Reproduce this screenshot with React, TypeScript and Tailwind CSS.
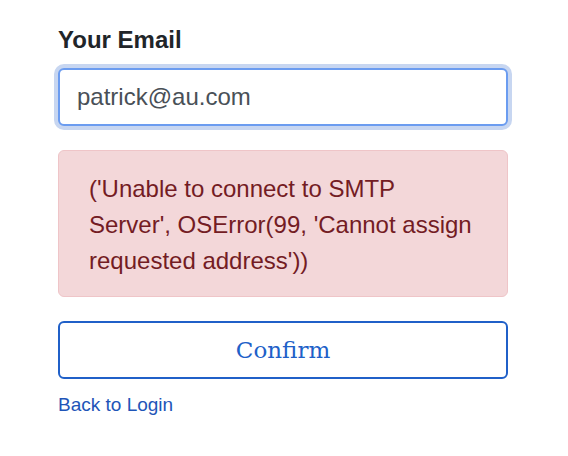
export default function App() {
  return (
    <div className="w-[568px] h-[456px] bg-white" style={{ fontFamily: '"Liberation Sans", Arial, sans-serif' }}>
      <div className="pl-[58px] pr-[60px] pt-[22px] flex flex-col">
        <label className="text-[24px] font-bold text-[#212529] leading-[36px]">Your Email</label>
        <div className="mt-[10px] h-[58px] rounded-[6px] border-2 border-[#6b9cf0] bg-white flex items-center pl-[17px] text-[24px] text-[#495057] shadow-[0_0_0_4px_#c7d6f1]">
          patrick@au.com
        </div>
        <div className="mt-[24px] rounded-[6px] border border-[#efc5c8] bg-[#f3d7d9] pl-[30px] pr-[30px] pt-[20px] pb-[17px] text-[24px] leading-[36px] text-[#731c24]">
          ('Unable to connect to SMTP Server', OSError(99, 'Cannot assign requested address'))
        </div>
        <button className="mt-[24px] h-[58px] rounded-[6px] border-2 border-[#2060c8] bg-white text-[#2060c8] text-[23px]" style={{ fontFamily: '"DejaVu Serif", "Liberation Serif", serif' }}>
          Confirm
        </button>
        <a className="mt-[11px] text-[19px] text-[#1e55b8] leading-[29px]">Back to Login</a>
      </div>
    </div>
  );
}
